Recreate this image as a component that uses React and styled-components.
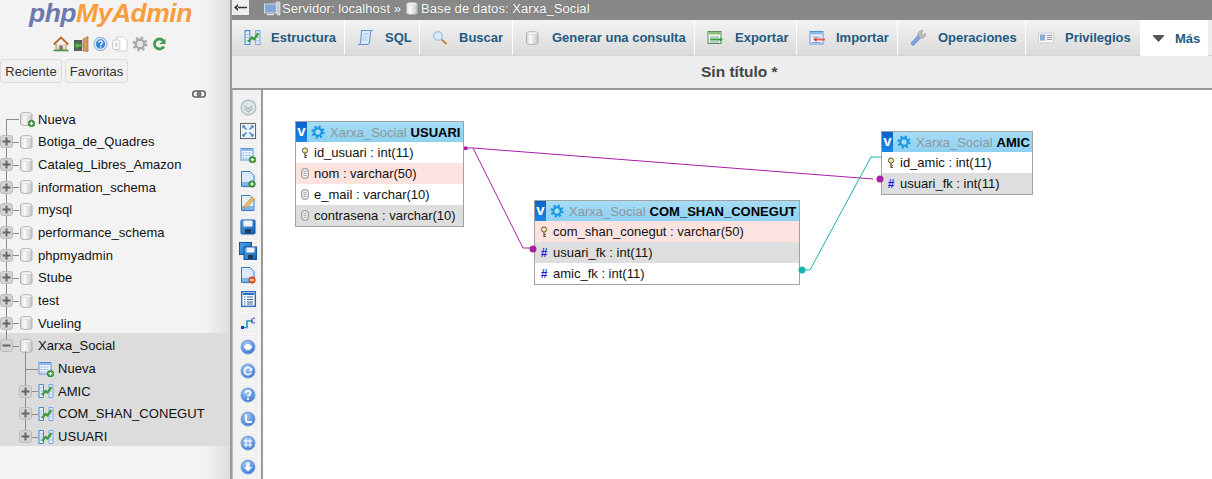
import styled, { createGlobalStyle } from "styled-components";

const GlobalStyle = createGlobalStyle`
  html, body {
    margin: 0;
    padding: 0;
    height: 100%;
    overflow: hidden;
    background: #fff;
  }
  body {
    font-family: "Liberation Sans", Arial, sans-serif;
    font-size: 13px;
    color: #111;
  }
`

const Page = styled.div`
  display: flex;
  width: 1212px;
  height: 479px;
  overflow: hidden;
`

/* sidebar */

const Sidebar = styled.aside`
  flex: 0 0 230px;
  height: 479px;
  border-right: 2px solid #9a9a9a;
  background: linear-gradient(to right, #f3f3f3 0, #f3f3f3 205px, #dedede 100%);
  display: flex;
  flex-direction: column;
`

const Logo = styled.div`
  height: 27px;
  padding-left: 29px;
  font-size: 26.5px;
  line-height: 27px;
  font-weight: 700;
  font-style: italic;
  letter-spacing: -0.5px;
  white-space: nowrap;
`

const LogoPhp = styled.span`
  color: #6b79ae;
`

const LogoName = styled.span`
  color: #f89d3d;
`

const QuickIcons = styled.div`
  display: flex;
  align-items: center;
  height: 18px;
  margin-top: 8px;
  padding-left: 53px;
  gap: 4px;
`

const NavTabs = styled.div`
  display: flex;
  gap: 3px;
  margin-top: 6px;
`

const NavTab = styled.div`
  width: ${p => p.$w}px;
  height: 24px;
  box-sizing: border-box;
  border: 1px solid #dcdcdc;
  border-radius: 3px;
  background: #f1f1f1;
  font-size: 13px;
  line-height: 23px;
  text-align: center;
  color: #333;
`

const LinkRow = styled.div`
  display: flex;
  justify-content: flex-end;
  height: 12px;
  padding-right: 24px;
  margin-top: 6px;
`

const Tree = styled.div`
  margin-top: 7px;
  display: flex;
  flex-direction: column;
`

const Row = styled.div`
  display: flex;
  align-items: center;
  height: 22.67px;
  flex: 0 0 22.67px;
  white-space: nowrap;
  padding-left: ${p => (p.$depth ? 19 : 0)}px;
`

const Gutter = styled.div`
  position: relative;
  flex: 0 0 19px;
  height: 100%;

  &::before {
    content: "";
    position: absolute;
    left: 6px;
    width: 1px;
    background: #8c8c8c;
    top: ${p => (p.$start ? "50%" : p.$fromParent ? "-6px" : "0")};
    bottom: ${p => (p.$end ? "50%" : "0")};
  }

  &::after {
    content: "";
    position: absolute;
    left: 6px;
    right: 0;
    top: 50%;
    height: 1px;
    background: #8c8c8c;
  }
`

const Expander = styled.div`
  position: absolute;
  z-index: 1;
  left: 0;
  top: 50%;
  margin-top: -6.5px;
  width: 13px;
  height: 13px;
  box-sizing: border-box;
  border: 1px solid #bbb;
  border-radius: 3px;
  background: #d4d4d4;
  color: #666;
  display: flex;
  align-items: center;
  justify-content: center;
`

const RowLabel = styled.span`
  margin-left: ${p => (p.$depth ? 4 : 3)}px;
  font-size: 13px;
  letter-spacing: 0.05px;
  color: #111;
`

const Selected = styled.div`
  background: #dcdcdc;
  margin-top: -2px;
  padding-top: 2px;
  height: 113px;
  box-sizing: border-box;
`

/* main */

const Main = styled.main`
  flex: 1;
  min-width: 0;
  display: flex;
  flex-direction: column;
`

const TopBar = styled.div`
  height: 20px;
  flex: 0 0 20px;
  background: #888;
  display: flex;
  align-items: flex-start;
  color: #fff;
  font-size: 13px;
  letter-spacing: 0.06px;
  line-height: 17px;
  text-shadow: 0 0 1px #555;
  white-space: nowrap;
`

const BackButton = styled.div`
  width: 17px;
  height: 15px;
  background: #eee;
  color: #333;
  display: flex;
  align-items: center;
  justify-content: center;
  margin-right: 15px;
`

const Crumb = styled.span`
  display: inline-flex;
  align-items: center;
  gap: 1px;
  margin-right: 4px;
`

const Tabs = styled.nav`
  height: 36px;
  flex: 0 0 36px;
  display: flex;
  background: #eee;
  box-sizing: border-box;
  border-bottom: 1px solid #d4d4d4;
`

const Tab = styled.div`
  width: ${p => p.$w}px;
  box-sizing: border-box;
  height: ${p => (p.$active ? 36 : 35)}px;
  padding-left: 12px;
  display: flex;
  align-items: center;
  gap: ${p => p.$gap || 10}px;
  border-right: ${p => (p.$active ? "0" : "1px solid #fff")};
  background: ${p => (p.$active ? "#fff" : "linear-gradient(#f3f3f3, #dadada)")};
  font-size: 13px;
  font-weight: 700;
  color: #235a81;
  white-space: nowrap;
`

const TitleBar = styled.div`
  height: 34px;
  flex: 0 0 34px;
  box-sizing: border-box;
  background: #eee;
  border-bottom: 2px solid #999;
  padding-left: 469px;
  font-size: 15.5px;
  font-weight: 700;
  line-height: 31px;
  color: #444;
`

const Workspace = styled.div`
  flex: 1;
  display: flex;
  min-height: 0;
`

const ToolColumn = styled.div`
  flex: 0 0 31px;
  box-sizing: border-box;
  background: #f0f0f0;
  border-right: 2px solid #999;
  border-left: 1px solid #bbb;
  padding: 6px 0 0 4px;
  display: flex;
  flex-direction: column;
  gap: 2px;
  overflow: hidden;
`

const ToolButton = styled.div`
  flex: 0 0 22px;
  width: 22px;
  box-sizing: border-box;
  border: 1px dotted #fff;
  display: flex;
  align-items: center;
  justify-content: center;
`

const Canvas = styled.div`
  flex: 1;
  position: relative;
  background: #fff;
  overflow: hidden;
`

const Wires = styled.svg`
  position: absolute;
  left: 0;
  top: 0;
`

const DbTable = styled.div`
  position: absolute;
  left: ${p => p.$x}px;
  top: ${p => p.$y}px;
  width: ${p => p.$w}px;
  box-sizing: border-box;
  border: 1px solid #a2a2a2;
  background: #fff;
`

const TableHead = styled.div`
  display: flex;
  align-items: center;
  height: 20px;
  background: linear-gradient(#a6dcf6, #8fd1f1);
  white-space: nowrap;
  overflow: hidden;
`

const ToggleV = styled.div`
  flex: 0 0 11px;
  height: 20px;
  background: linear-gradient(#0a62c8, #1a86e8);
  color: #fff;
  font-size: 15px;
  font-weight: 700;
  line-height: 18px;
  text-align: center;
`

const SchemaName = styled.span`
  margin-left: 5px;
  font-size: 13px;
  color: #8f979c;
`

const TableName = styled.span`
  margin-left: 4px;
  font-size: 13px;
  font-weight: 700;
  color: #000;
`

const FieldRow = styled.div`
  display: flex;
  align-items: center;
  height: 21px;
  padding-left: 4px;
  gap: 4px;
  font-size: 13px;
  white-space: nowrap;
  color: #111;
  background: ${p => (p.$tone === "pink" ? "#fde3e0" : p.$tone === "gray" ? "#dedede" : "#fff")};
`

const FieldMark = styled.span`
  flex: 0 0 10px;
  display: flex;
  justify-content: center;
  font-size: 12px;
  font-weight: 700;
  color: #1a1ae0;
`

const GearSlot = styled.span`
  display: flex;
  margin-left: 4px;
`

/* icons */

const Defs = () => (
  <svg width="0" height="0" style={{ position: "absolute" }}>
    <defs>
      <linearGradient id="cyl" x1="0" x2="1" y1="0" y2="0">
        <stop offset="0" stopColor="#d8d8d8" />
        <stop offset="0.35" stopColor="#fafafa" />
        <stop offset="1" stopColor="#c4c4c4" />
      </linearGradient>
      <radialGradient id="orb" cx="0.4" cy="0.3" r="0.8">
        <stop offset="0" stopColor="#a9cdf5" />
        <stop offset="1" stopColor="#2f6fd0" />
      </radialGradient>
      <linearGradient id="floppy" x1="0" x2="1" y1="0" y2="1">
        <stop offset="0" stopColor="#5aa9e6" />
        <stop offset="1" stopColor="#0f5fb0" />
      </linearGradient>
    </defs>
  </svg>
)

const AddBadge = ({ cx = 12.5, cy = 12.5 }) => (
  <g>
    <circle cx={cx} cy={cy} r="3.3" fill="#3f9a3c" stroke="#2c7a2a" strokeWidth="0.6" />
    <path d={`M${cx - 1.8} ${cy}h3.6M${cx} ${cy - 1.8}v3.6`} stroke="#fff" strokeWidth="1.2" />
  </g>
)

const DbIcon = ({ add, size = 16 }) => (
  <svg width={size} height={size} viewBox="0 0 16 16">
    <path d="M1.5 3.2c0-2.2 11.500-2.200 11.500 0v9.600c0 2.200-11.500 2.200-11.500 0z" fill="url(#cyl)" stroke="#b0b0b0" />
    <ellipse cx="7.250" cy="3.200" rx="5.200" ry="1.300" fill="#f7f7f7" stroke="#c8c8c8" strokeWidth="0.5" />
    {add && <AddBadge />}
  </svg>
)

const StructIcon = ({ size = 16 }) => (
  <svg width={size} height={size} viewBox="0 0 16 16">
    <path d="M1 1.5h4.5v13H1z" fill="#e6f0fb" stroke="#4a86d0" />
    <path d="M11 1.5h4v13h-4z" fill="#e6f0fb" stroke="#7aa8de" />
    <path d="M2 5h3M2 8h3M2 11h3M12 5h2M12 8h2M12 11h2" stroke="#9dbde6" />
    <path d="M4 12l3.5-4 2 1.5L13.5 4" fill="none" stroke="#3f9a3c" strokeWidth="2.2" />
  </svg>
)

const TableAddIcon = () => (
  <svg width="16" height="16" viewBox="0 0 16 16">
    <rect x="1" y="1.5" width="12" height="11.5" fill="#f2f7fd" stroke="#5a94d8" />
    <path d="M1.5 2h11v2h-11z" fill="#8db8ea" />
    <path d="M2.5 6h9M2.5 8.5h9M2.5 11h9" stroke="#7ca5d8" strokeDasharray="2 1" />
    <AddBadge cx={12.5} cy={12.7} />
  </svg>
)

const Plus = () => (
  <svg width="9" height="9" viewBox="0 0 9 9">
    <path d="M0.5 4.5h8M4.5 0.5v8" stroke="#666" strokeWidth="2" />
  </svg>
)

const Minus = () => (
  <svg width="9" height="9" viewBox="0 0 9 9">
    <path d="M0.5 4.5h8" stroke="#666" strokeWidth="2" />
  </svg>
)

const HomeIcon = () => (
  <svg width="16" height="16" viewBox="0 0 16 16">
    <path d="M3 8v6h10V8" fill="#f0e2c8" stroke="#a98f68" />
    <path d="M0.8 8.5L8 1.5l7.2 7" fill="none" stroke="#b5672c" strokeWidth="1.8" />
    <rect x="6.3" y="9.5" width="3.4" height="4.5" fill="#777" />
    <path d="M0.5 14.5h15" stroke="#4c9c3f" strokeWidth="1.6" />
  </svg>
)

const ExitIcon = () => (
  <svg width="16" height="16" viewBox="0 0 16 16">
    <rect x="1" y="4" width="8" height="11" fill="#54605a" />
    <path d="M10 3l5-2.5v15l-5-0.5z" fill="#d79a5c" stroke="#a56a35" strokeWidth="0.6" />
    <path d="M1 9.5l4-3.5v2h4v3H5v2z" fill="#58b04c" stroke="#2f7a2a" strokeWidth="0.5" />
  </svg>
)

const HelpOrb = () => (
  <svg width="15" height="16" viewBox="0 0 15 16">
    <circle cx="7.5" cy="8" r="6.6" fill="#dcebf8" stroke="#7fa8d6" />
    <circle cx="7.5" cy="8" r="4.7" fill="#3c84d4" />
    <path d="M5.8 6.6c0-2.2 3.6-2.2 3.6 0 0 1.4-1.7 1.3-1.7 2.6" fill="none" stroke="#fff" strokeWidth="1.3" />
    <circle cx="7.7" cy="11" r="0.8" fill="#fff" />
  </svg>
)

const DocsIcon = () => (
  <svg width="16" height="16" viewBox="0 0 16 16">
    <path d="M4.5 1h7l3.5 3v11h-10.500z" fill="#fff" stroke="#d0d0d0" />
    <rect x="0.8" y="4" width="7" height="9.500" rx="1.500" fill="#fff" stroke="#c8c8c8" />
    <rect x="3" y="6.500" width="2.600" height="4.500" fill="#d8d8d8" />
  </svg>
)

const GearIcon = ({ color = "#a8a8a8", hub = "#e8e8e8", size = 16 }) => (
  <svg width={size} height={size} viewBox="0 0 16 16">
    <circle cx="8" cy="8" r="6.200" fill="none" stroke={color} strokeWidth="2.600" strokeDasharray="2.400 2.470" />
    <circle cx="8" cy="8" r="4.200" fill="none" stroke={color} strokeWidth="2.400" />
    <circle cx="8" cy="8" r="2.800" fill={hub} />
  </svg>
)

const ReloadIcon = () => (
  <svg width="14" height="16" viewBox="0 0 14 16">
    <path d="M11.500 5A5 5 0 1 0 11.800 10.500" fill="none" stroke="#3f9e54" strokeWidth="2.800" />
    <path d="M7 8h6.500v-5z" fill="#3f9e54" />
  </svg>
)

const LinkIcon = () => (
  <svg width="14" height="10" viewBox="0 0 14 10">
    <rect x="0.800" y="2" width="7.500" height="6" rx="2.500" fill="none" stroke="#666" strokeWidth="1.600" />
    <rect x="5.700" y="2" width="7.500" height="6" rx="2.500" fill="none" stroke="#666" strokeWidth="1.600" />
    <path d="M4.500 5h5" stroke="#666" strokeWidth="1.200" />
  </svg>
)

const ServerIcon = () => (
  <svg width="17" height="16" viewBox="0 0 17 16">
    <rect x="0.500" y="3" width="12" height="9" fill="#7fa6d6" stroke="#d8d8d8" />
    <path d="M12 1h4v13h-3z" fill="#c8c8c8" stroke="#eee" strokeWidth="0.600" />
    <path d="M3 13.500h7" stroke="#ddd" strokeWidth="1.500" />
  </svg>
)

const ScrollIcon = () => (
  <svg width="17" height="17" viewBox="0 0 17 17">
    <path d="M4.500 1.500h11c-1.500 0-2 1-2 2.500l-1 9c0 1.500-1 2.500-2.500 2.500H1.500c1.500 0 2-1 2.200-2.500z" fill="#dceafa" stroke="#5a8fd0" />
    <path d="M6 5h5M5.500 8h5M5.200 11h5" stroke="#a6c4ea" />
  </svg>
)

const SearchIcon = () => (
  <svg width="16" height="16" viewBox="0 0 16 16">
    <circle cx="6" cy="6" r="4.300" fill="#d9ebfa" stroke="#a8c4de" strokeWidth="1.400" />
    <path d="M9.500 9.500l5 4.500" stroke="#c8884c" strokeWidth="2.200" />
  </svg>
)

const ExportIcon = () => (
  <svg width="17" height="16" viewBox="0 0 17 16">
    <rect x="1" y="1.500" width="13" height="12" fill="#f4f8e8" stroke="#5b8f60" />
    <path d="M1.500 2h12v2.500h-12z" fill="#8fbf78" />
    <path d="M3 7h9M3 12h9" stroke="#7ca5d8" />
    <path d="M3 9.500h11" stroke="#3f9a3c" strokeWidth="2" />
    <path d="M13 7.500l3 2-3 2z" fill="#3f9a3c" />
  </svg>
)

const ImportIcon = () => (
  <svg width="17" height="16" viewBox="0 0 17 16">
    <rect x="1" y="1.500" width="13" height="12.500" fill="#f4f8fd" stroke="#5a94d8" />
    <path d="M1.500 2h12v2.500h-12z" fill="#8db8ea" />
    <path d="M3 7h9M3 12.500h9" stroke="#7ca5d8" />
    <path d="M7 9.500h9" stroke="#ea5a5a" strokeWidth="2" />
    <path d="M7.500 7l-3.500 2.500 3.500 2.500z" fill="#e04040" />
  </svg>
)

const WrenchIcon = () => (
  <svg width="17" height="17" viewBox="0 0 17 17">
    <path d="M1.500 13.500l7-7.500 2.500 2.500-7 7.500c-1.500 1-3.500-1-2.500-2.500z" fill="#7ea4dc" stroke="#5c82c0" strokeWidth="0.600" />
    <path d="M8 6.500c-0.500-3 2-5.500 5-5l-2 2.500 2 2 2.500-1.500c0.500 3-2.500 5.500-5 4.500z" fill="#bdbdbd" stroke="#8c8c8c" strokeWidth="0.600" />
  </svg>
)

const CardIcon = () => (
  <svg width="16" height="14" viewBox="0 0 16 14">
    <rect x="0.500" y="2" width="15" height="10" fill="#f6f6f6" stroke="#cfcfcf" />
    <rect x="2" y="3.500" width="5" height="6" fill="#7fb0e2" />
    <circle cx="4.500" cy="5.500" r="1.300" fill="#e0a060" />
    <path d="M9 4.500h5M9 6.500h5M9 8.500h5" stroke="#9a9a9a" />
  </svg>
)

const TriangleIcon = () => (
  <svg width="11" height="7" viewBox="0 0 11 7">
    <path d="M0 0.500h11L5.500 6.500z" fill="#555" stroke="#222" strokeWidth="0.600" />
  </svg>
)

const ArrowBack = () => (
  <svg width="13" height="7" viewBox="0 0 13 7">
    <path d="M4 0L0 3.500 4 7z M3 2.800h10v1.400H3z" fill="#333" />
  </svg>
)

const KeyIcon = () => (
  <svg width="8" height="12" viewBox="0 0 8 12">
    <circle cx="4" cy="3.500" r="2.600" fill="#f2e6a8" stroke="#5e5438" />
    <path d="M4 6v5M4 8.500h2M4 10.500h2" stroke="#5e5438" strokeWidth="1.200" />
  </svg>
)

const CommentIcon = () => (
  <svg width="8" height="11" viewBox="0 0 8 11">
    <rect x="0.700" y="0.700" width="6.600" height="9.600" rx="2.500" fill="#eee" stroke="#8a8a8a" />
    <path d="M2.500 3.500h3M2.500 5.500h3M2.500 7.500h3" stroke="#999" strokeWidth="0.800" />
  </svg>
)

const Orb = ({ children }) => (
  <svg width="16" height="16" viewBox="0 0 16 16">
    <circle cx="8" cy="8" r="7" fill="url(#orb)" stroke="#6d9ad8" strokeWidth="0.800" />
    {children}
  </svg>
)

const Page2 = ({ children, fill = "#dbeafa" }) => (
  <svg width="16" height="18" viewBox="0 0 16 18">
    <path d="M1.500 1.500h8.500l4 4v11h-12.500z" fill={fill} stroke="#3d78c4" />
    <path d="M2 12h11.500v4H2z" fill="#7bb4e8" />
    {children}
  </svg>
)

const toolIcons = [
  <svg key="0" width="17" height="17" viewBox="0 0 17 17">
    <circle cx="8.500" cy="8.500" r="7.300" fill="#dfe6e8" stroke="#b4c0c4" strokeWidth="1.400" />
    <path d="M4.500 6.500l4 3.500 4-3.500M4.500 9.500l4 3.500 4-3.500" fill="none" stroke="#aebcc2" strokeWidth="1.600" />
  </svg>,
  <svg key="1" width="16" height="16" viewBox="0 0 16 16">
    <rect x="0.500" y="0.500" width="15" height="15" fill="#eef3f8" stroke="#666" />
    <path d="M3 3l3.500 3.500M13 3L9.500 6.500M3 13l3.500-3.500M13 13L9.500 9.500" stroke="#4a8ad8" strokeWidth="1.600" />
    <path d="M2.500 2.500h3l-3 3zM13.500 2.500h-3l3 3zM2.500 13.500h3l-3-3zM13.500 13.500h-3l3-3z" fill="#3a78c8" />
  </svg>,
  <TableAddIcon key="2" />,
  <Page2 key="3"><AddBadge cx={12} cy={14} /></Page2>,
  <Page2 key="4" fill="#e4effb">
    <path d="M4 14.500l1-3.500 7-8 2.500 2-7 8z" fill="#eebb5c" stroke="#b88434" strokeWidth="0.600" />
  </Page2>,
  <svg key="5" width="16" height="16" viewBox="0 0 16 16">
    <rect x="1" y="1" width="14" height="14" rx="1" fill="url(#floppy)" stroke="#0f5aa8" />
    <rect x="3.500" y="1.500" width="9" height="6" fill="#eef4fa" />
    <rect x="5" y="10" width="6" height="4.500" fill="#1e3c5c" />
  </svg>,
  <svg key="6" width="18" height="18" viewBox="0 0 18 18">
    <rect x="0.500" y="0.500" width="12" height="12" fill="url(#floppy)" stroke="#0f5aa8" />
    <rect x="5" y="5" width="12.500" height="12.500" fill="url(#floppy)" stroke="#0f5aa8" />
    <rect x="7.500" y="5.500" width="8" height="5" fill="#eef4fa" />
    <rect x="9" y="13" width="5" height="4" fill="#1e3c5c" />
  </svg>,
  <Page2 key="7">
    <circle cx="12" cy="14" r="3.300" fill="#e0582a" stroke="#b83c18" strokeWidth="0.600" />
    <path d="M10 14h4" stroke="#fff" strokeWidth="1.200" />
  </Page2>,
  <svg key="8" width="15" height="16" viewBox="0 0 15 16">
    <rect x="0.700" y="0.700" width="13.600" height="14.600" fill="#fff" stroke="#2a6cc4" strokeWidth="1.400" />
    <path d="M2 2h11v2H2z" fill="#2a6cc4" />
    <path d="M3 6h1.500M6 6h6M3 8.500h1.500M6 8.500h6M3 11h1.500M6 11h6M3 13h1.500M6 13h6" stroke="#3e5c90" />
  </svg>,
  <svg key="9" width="14" height="14" viewBox="0 0 14 14">
    <path d="M2 11.500h4V5h5" fill="none" stroke="#2a9ab0" strokeWidth="1.600" />
    <rect x="0" y="10" width="3" height="3" fill="#1c3cc0" />
    <path d="M11 2.500v5M13 1.500v1.500M13 6v1.500" stroke="#1c3cc0" strokeWidth="1.200" />
  </svg>,
  <Orb key="10"><path d="M3.500 8L6.500 5h3l3 3-3 3h-3z" fill="#fff" /></Orb>,
  <Orb key="11">
    <path d="M11 6A3.600 3.600 0 1 0 11.300 9.500" fill="none" stroke="#fff" strokeWidth="1.800" opacity="0.900" />
    <path d="M8 8.200h4.200V4.800z" fill="#fff" opacity="0.900" />
  </Orb>,
  <Orb key="12">
    <path d="M5.500 6.200c0-3 5-3 5 0 0 1.900-2.500 1.700-2.500 3.500" fill="none" stroke="#fff" strokeWidth="1.800" />
    <circle cx="8" cy="12" r="1.100" fill="#fff" />
  </Orb>,
  <Orb key="13">
    <path d="M6 3.500V9.500a1.500 1.500 0 0 0 1.500 1.500H12" fill="none" stroke="#fff" strokeWidth="1.800" />
  </Orb>,
  <Orb key="14">
    <path d="M6 3.500v9M10 3.500v9M3.500 6h9M3.500 10h9" stroke="#fff" strokeWidth="1.200" />
  </Orb>,
  <Orb key="15">
    <path d="M6.500 3.500h3V8H12l-4 4.500L4 8h2.500z" fill="#fff" />
  </Orb>
]

const databases = [
  "Botiga_de_Quadres",
  "Cataleg_Libres_Amazon",
  "information_schema",
  "mysql",
  "performance_schema",
  "phpmyadmin",
  "Stube",
  "test",
  "Vueling"
]

const tabs = [
  { label: "Estructura", w: 113, icon: <StructIcon size={17} /> },
  { label: "SQL", w: 75, icon: <ScrollIcon />, gap: 11 },
  { label: "Buscar", w: 93, icon: <SearchIcon />, gap: 11 },
  { label: "Generar una consulta", w: 182, icon: <DbIcon />, gap: 11 },
  { label: "Exportar", w: 102, icon: <ExportIcon />, gap: 11 },
  { label: "Importar", w: 101, icon: <ImportIcon />, gap: 10 },
  { label: "Operaciones", w: 128, icon: <WrenchIcon />, gap: 11 },
  { label: "Privilegios", w: 115, icon: <CardIcon />, gap: 11 }
]

const diagramTables = [
  {
    name: "USUARI",
    x: 32, y: 31, w: 169,
    fields: [
      { text: "id_usuari : int(11)", mark: "key" },
      { text: "nom : varchar(50)", mark: "comment", tone: "pink" },
      { text: "e_mail : varchar(10)", mark: "comment" },
      { text: "contrasena : varchar(10)", mark: "comment", tone: "gray" }
    ]
  },
  {
    name: "COM_SHAN_CONEGUT",
    x: 271, y: 110, w: 266,
    fields: [
      { text: "com_shan_conegut : varchar(50)", mark: "key", tone: "pink" },
      { text: "usuari_fk : int(11)", mark: "hash", tone: "gray" },
      { text: "amic_fk : int(11)", mark: "hash" }
    ]
  },
  {
    name: "AMIC",
    x: 618, y: 41, w: 152,
    fields: [
      { text: "id_amic : int(11)", mark: "key" },
      { text: "usuari_fk : int(11)", mark: "hash", tone: "gray" }
    ]
  }
]

function Mark({ kind }) {
  if (kind === "key") return <FieldMark><KeyIcon /></FieldMark>
  if (kind === "comment") return <FieldMark><CommentIcon /></FieldMark>
  return <FieldMark>#</FieldMark>
}

function DiagramTable({ table }) {
  return (
    <DbTable $x={table.x} $y={table.y} $w={table.w}>
      <TableHead>
        <ToggleV>v</ToggleV>
        <GearSlot><GearIcon color="#1496e4" hub="#a6dcf6" size={14} /></GearSlot>
        <SchemaName>Xarxa_Social</SchemaName>
        <TableName>{table.name}</TableName>
      </TableHead>
      {table.fields.map(f => (
        <FieldRow key={f.text} $tone={f.tone}>
          <Mark kind={f.mark} />
          {f.text}
        </FieldRow>
      ))}
    </DbTable>
  )
}

export default function App() {
  return (
    <Page>
      <GlobalStyle />
      <Defs />

      <Sidebar>
        <Logo>
          <LogoPhp>php</LogoPhp>
          <LogoName>MyAdmin</LogoName>
        </Logo>
        <QuickIcons>
          <HomeIcon />
          <ExitIcon />
          <HelpOrb />
          <DocsIcon />
          <GearIcon />
          <ReloadIcon />
        </QuickIcons>
        <NavTabs>
          <NavTab $w={62}>Reciente</NavTab>
          <NavTab $w={63}>Favoritas</NavTab>
        </NavTabs>
        <LinkRow><LinkIcon /></LinkRow>

        <Tree>
          <Row>
            <Gutter $start />
            <DbIcon add />
            <RowLabel>Nueva</RowLabel>
          </Row>
          {databases.map(name => (
            <Row key={name}>
              <Gutter><Expander><Plus /></Expander></Gutter>
              <DbIcon />
              <RowLabel>{name}</RowLabel>
            </Row>
          ))}
          <Selected>
            <Row>
              <Gutter $end><Expander><Minus /></Expander></Gutter>
              <DbIcon />
              <RowLabel>Xarxa_Social</RowLabel>
            </Row>
            <Row $depth={1}>
              <Gutter $fromParent />
              <TableAddIcon />
              <RowLabel $depth={1}>Nueva</RowLabel>
            </Row>
            {["AMIC", "COM_SHAN_CONEGUT", "USUARI"].map((name, i) => (
              <Row key={name} $depth={1}>
                <Gutter $end={i === 2}><Expander><Plus /></Expander></Gutter>
                <StructIcon />
                <RowLabel $depth={1}>{name}</RowLabel>
              </Row>
            ))}
          </Selected>
        </Tree>
      </Sidebar>

      <Main>
        <TopBar>
          <BackButton><ArrowBack /></BackButton>
          <Crumb><ServerIcon /> Servidor: localhost »</Crumb>
          <Crumb><DbIcon size={15} /> Base de datos: Xarxa_Social</Crumb>
        </TopBar>

        <Tabs>
          {tabs.map(t => (
            <Tab key={t.label} $w={t.w} $gap={t.gap}>
              {t.icon}
              {t.label}
            </Tab>
          ))}
          <Tab $w={67} $active $gap={11}>
            <TriangleIcon />
            Más
          </Tab>
        </Tabs>

        <TitleBar>Sin título *</TitleBar>

        <Workspace>
          <ToolColumn>
            {toolIcons.map(icon => <ToolButton key={icon.key}>{icon}</ToolButton>)}
          </ToolColumn>
          <Canvas>
            {diagramTables.map(t => <DiagramTable key={t.name} table={t} />)}
            <Wires width="949" height="389">
              <path d="M203 58H210L610 89" fill="none" stroke="#a81fa8" strokeWidth="1" />
              <path d="M210 58L260 158H270" fill="none" stroke="#a81fa8" strokeWidth="1" />
              <rect x="201" y="56.500" width="3.500" height="3.500" fill="#a81fa8" />
              <circle cx="270" cy="159" r="3.500" fill="#a81fa8" />
              <circle cx="617" cy="89" r="3.500" fill="#a81fa8" />
              <path d="M538 180H547L608 67H618" fill="none" stroke="#19b0b0" strokeWidth="1" />
              <circle cx="539" cy="180" r="3.500" fill="#19b0b0" />
            </Wires>
          </Canvas>
        </Workspace>
      </Main>
    </Page>
  )
}
